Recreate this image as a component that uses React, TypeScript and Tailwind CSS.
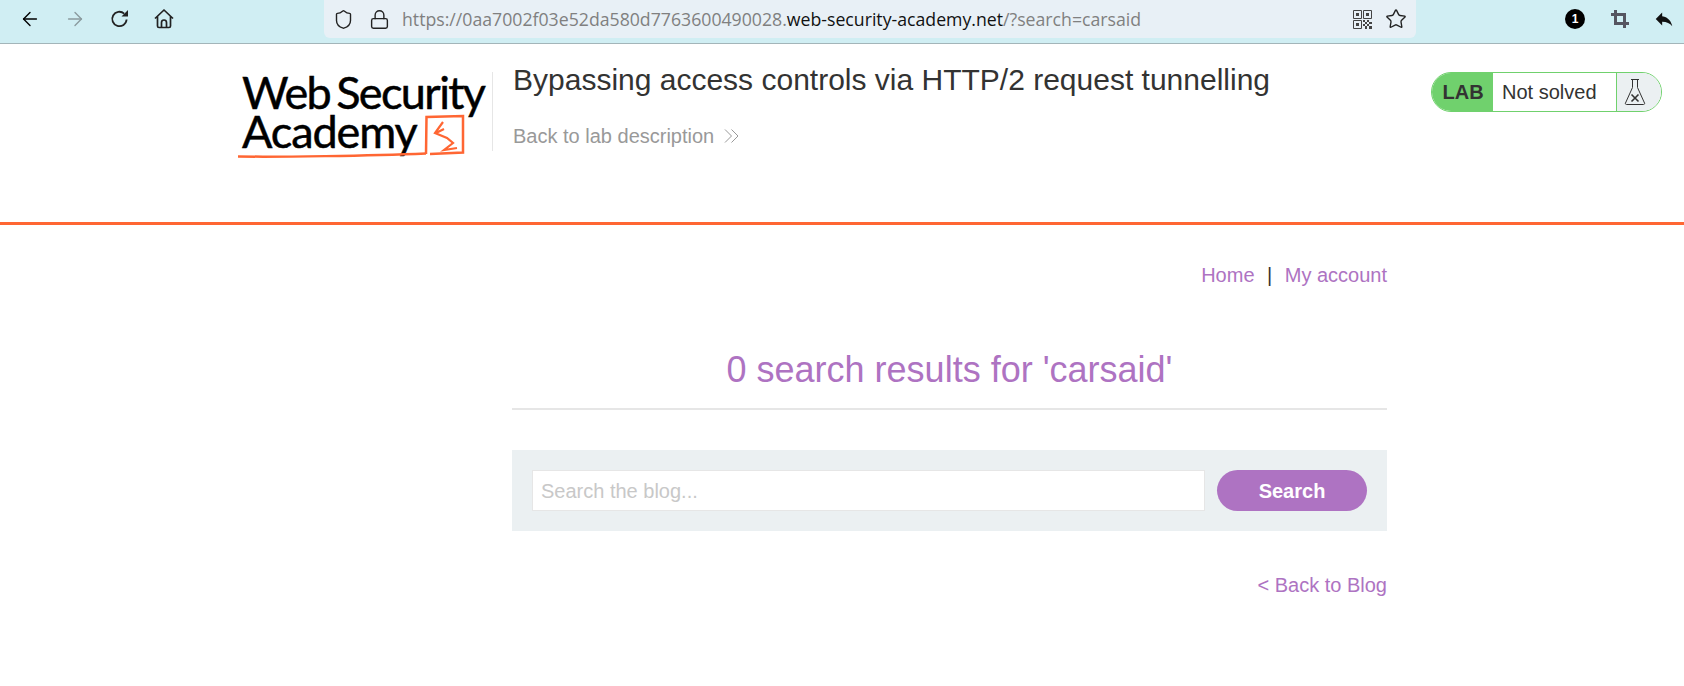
import { ArrowLeft, ArrowRight, Shield, Lock, Star } from "lucide-react";
import { MdReply } from "react-icons/md";

const sans = "font-['Liberation_Sans',Arial,sans-serif]";

function QrIcon() {
    return (
        <svg width="19" height="19" viewBox="0 0 19 19" className="text-[#444]">
            <path d="M.5.5h8v8h-8zM10.5.5h8v8h-8zM.5 10.5h8v8h-8z" fill="none" stroke="currentColor" />
            <path d="M3 3h3v3H3zM13 3h3v3h-3zM3 13h3v3H3zM10 10h2v2h-2zM14 10h2v2h-2zM12 12h2v2h-2zM16 12h3v2h-3zM10 14h2v2h-2zM14 14h2v2h-2zM12 16h2v3h-2zM16 16h3v3h-3z" fill="currentColor" />
        </svg>
    );
}

function ReloadIcon() {
    return (
        <svg width="20" height="20" viewBox="0 0 20 20" fill="none" stroke="#222" strokeWidth="1.8">
            <path d="M16.6 10.5a7.2 7.2 0 1 1-2.4-5.9" />
            <path d="M18 1v6.5h-6.5z" fill="#222" stroke="none" />
        </svg>
    );
}

function HomeIcon() {
    return (
        <svg width="20" height="20" viewBox="0 0 20 20" fill="none" stroke="#222" strokeWidth="1.7" strokeLinejoin="round">
            <path d="M1 9.5L10 1l9 8.5M3.5 7.5v9.5a1.5 1.5 0 0 0 1.5 1.5h10a1.5 1.5 0 0 0 1.5-1.5V7.5" />
            <path d="M7.5 18.5v-5a2.5 2.5 0 0 1 5 0v5" />
        </svg>
    );
}

function CropIcon() {
    return (
        <svg width="18" height="18" viewBox="0 0 18 18" fill="none" stroke="#555560" strokeWidth="3">
            <path d="M4.5 0v13.5H18M0 4.5h13.5V18" />
        </svg>
    );
}

function Logo() {
    return (
        <svg width="250" height="92" viewBox="0 0 250 92" className="shrink-0 overflow-visible">
            <text x="4" y="38" fontFamily="Lato, sans-serif" fontSize="45" stroke="#000" strokeWidth="0.5" letterSpacing="-1.6" wordSpacing="-4" fill="#000">Web Security</text>
            <text x="4" y="77" fontFamily="Lato, sans-serif" fontSize="45" stroke="#000" strokeWidth="0.5" letterSpacing="-1.1" fill="#000">Academy</text>
            <path d="M0 85.5C40 86 130 85 188 82.5" stroke="#ff6633" strokeWidth="2.5" fill="none" />
            <path d="M188 83L188.5 46L225 45L225 81.5L192 83" stroke="#ff6633" strokeWidth="2.5" fill="none" />
            <path d="M205 51L197 62L209 67L215 72L206 79L219 77M198 62L206 58" stroke="#ff6633" strokeWidth="2.2" fill="none" />
        </svg>
    );
}

function FlaskIcon() {
    return (
        <svg width="22" height="28" viewBox="0 0 22 28" fill="none" stroke="#333" strokeWidth="1">
            <path d="M7 1.5h8M8.5 1.5v8L1.5 25a1 1 0 0 0 1 1.5h17a1 1 0 0 0 1-1.5L13.5 9.5v-8" />
            <path d="M7.5 16.5l7 7M14.5 16.5l-7 7" strokeWidth="1.6" />
        </svg>
    );
}

export default function App() {
    return (
        <div className={`${sans} h-[686px] w-[1684px] overflow-hidden bg-white`}>
            {/* browser chrome */}
            <div className="flex h-[44px] items-start border-b border-[#a3b5b9] bg-[#d0eef3]">
                <div className="flex h-[38px] w-[324px] items-center text-black">
                    <ArrowLeft size={22} strokeWidth={1.5} className="ml-[19px]" />
                    <ArrowRight size={22} strokeWidth={1.5} className="ml-[23px] text-[#8a9a9e]" />
                    <div className="ml-[24px]"><ReloadIcon /></div>
                    <div className="ml-[24px]"><HomeIcon /></div>
                </div>
                <div className="flex h-[38px] w-[1092px] items-center rounded-b-[6px] bg-[#e8f0f6]">
                    <Shield size={21} strokeWidth={1.6} className="ml-[9px] text-[#222]" />
                    <Lock size={21} strokeWidth={1.6} className="ml-[15px] text-[#222]" />
                    <div className="ml-[12px] flex-1 whitespace-nowrap font-['Open_Sans',sans-serif] text-[17.7px] text-[#808080]">
                        https://0aa7002f03e52da580d7763600490028.<span className="text-[#111]">web-security-academy.net</span>/?search=carsaid
                    </div>
                    <QrIcon />
                    <Star size={22} strokeWidth={1.5} className="ml-[13px] mr-[9px] text-[#222]" />
                </div>
                <div className="flex h-[38px] flex-1 items-center text-[#222]">
                    <div className="ml-[149px] flex h-[20px] w-[20px] items-center justify-center rounded-full bg-black text-[12px] font-bold text-white">1</div>
                    <div className="ml-[26px]"><CropIcon /></div>
                    <MdReply size={22} className="ml-[24px] text-[#111]" />
                </div>
            </div>

            {/* lab banner */}
            <div className="flex h-[181px] border-b-[3px] border-[#ff6633] pl-[238px]">
                <div className="mt-[27px]">
                    <Logo />
                </div>
                <div className="ml-[4px] mt-[28px] h-[79px] border-l border-[#e6e6e6] pl-[20px]">
                    <h2 className="-mt-[9px] whitespace-nowrap text-[30px] leading-[34px] text-[#333332]">Bypassing access controls via HTTP/2 request tunnelling</h2>
                    <div className="mt-[27px] flex items-center text-[20px] leading-[24px] text-[#999]">
                        Back to lab description
                        <svg width="16" height="16" viewBox="0 0 16 16" fill="none" stroke="#999" strokeWidth="1" className="ml-[10px]">
                            <path d="M1 1.5l6.5 6.5L1 14.5M7.5 1.5L14 8l-6.5 6.5" />
                        </svg>
                    </div>
                </div>
                <div className="ml-[161px] mt-[28px] flex h-[40px] w-[231px] overflow-hidden rounded-[20px] border border-[#70d16d]">
                    <div className="flex w-[61px] items-center justify-center bg-[#70d16d] pl-[1px] text-[20px] font-bold text-[#333332]">LAB</div>
                    <div className="flex w-[124px] items-center border-r border-[#70d16d] pl-[9px] text-[20px] text-[#333332]">Not solved</div>
                    <div className="flex flex-1 items-center bg-[#ebf0f2] pl-[7px]">
                        <FlaskIcon />
                    </div>
                </div>
            </div>

            {/* blog content */}
            <div className="ml-[512px] w-[875px]">
                <div className="mt-[38px] flex justify-end text-[20px] leading-[24px] text-[#ae73c2]">
                    <span>Home</span>
                    <span className="mx-[12.5px] text-[#333332]">|</span>
                    <span>My account</span>
                </div>
                <h1 className="mt-[61px] border-b-2 border-[#e6e6e6] pb-[16px] text-center text-[36px] leading-[44px] text-[#ae73c2]">0 search results for 'carsaid'</h1>
                <div className="mt-[40px] flex h-[81px] items-center bg-[#ebf0f2] px-[20px]">
                    <div className="flex h-[41px] w-[673px] items-center border border-[#e6e6e6] bg-white pl-[8px] text-[20px] text-[#c8c8c8]">Search the blog...</div>
                    <button className="ml-[12px] h-[41px] w-[150px] rounded-[21px] bg-[#ae73c2] text-[20px] font-bold text-white">Search</button>
                </div>
                <div className="mt-[42px] text-right text-[20px] leading-[24px] text-[#ae73c2]">&lt; Back to Blog</div>
            </div>
        </div>
    );
}
